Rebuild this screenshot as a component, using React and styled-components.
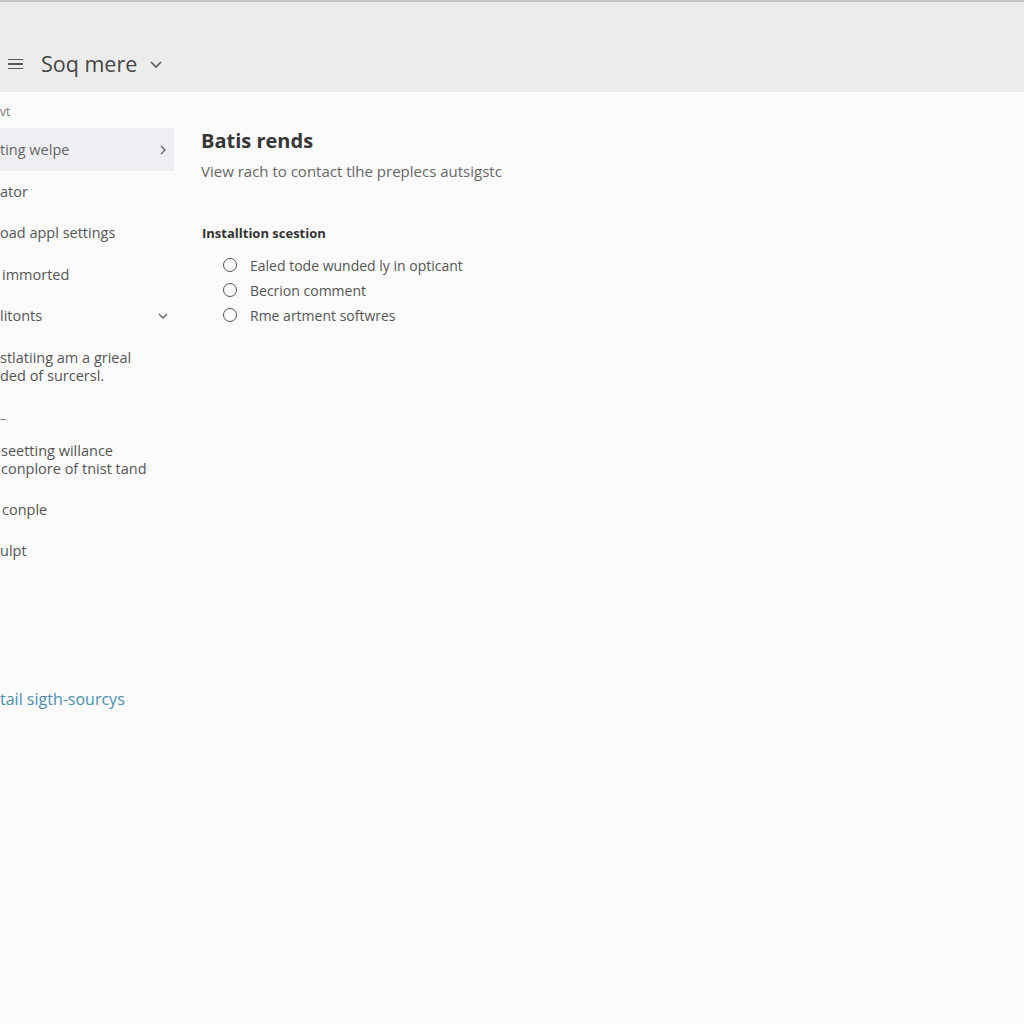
import React from 'react';
import styled, { createGlobalStyle } from 'styled-components';

const GlobalStyle = createGlobalStyle`
  html, body {
    margin: 0;
    padding: 0;
    background: #fbfbfb;
    font-family: 'Open Sans', 'Noto Sans', sans-serif;
  }
`;

const Page = styled.div`
  width: 1024px;
  height: 1024px;
  display: flex;
  flex-direction: column;
  background: #fbfbfb;
  overflow: hidden;
`;

const TopBar = styled.header`
  height: 92px;
  flex-shrink: 0;
  display: flex;
  align-items: flex-end;
  padding: 0 0 13px 8px;
  box-sizing: border-box;
  background: #ececec;
  border-top: 2px solid #c4c4c4;
`;

const Burger = styled.span`
  display: flex;
  flex-direction: column;
  gap: 3px;
  width: 15px;
  margin: 0 18px 10px 0;
  & > i {
    display: block;
    height: 1.5px;
    background: #555;
  }
`;

const AppTitle = styled.h1`
  margin: 0;
  font-size: 21.5px;
  font-weight: 400;
  color: #454545;
  line-height: 30px;
`;

const TitleChevron = styled.svg`
  margin: 0 0 8px 12px;
`;

const Body = styled.div`
  flex: 1;
  display: flex;
`;

const Sidebar = styled.nav`
  width: 174px;
  flex-shrink: 0;
  display: flex;
  flex-direction: column;
  padding-top: 10px;
`;

const Crumb = styled.div`
  font-size: 12px;
  color: #777;
  height: 26px;
  line-height: 20px;
`;

const NavItem = styled.div`
  display: flex;
  align-items: ${(p) => (p.$multi ? 'flex-start' : 'center')};
  justify-content: space-between;
  height: ${(p) => p.$h || 41.5}px;
  padding-top: ${(p) => p.$top || 0}px;
  padding-left: ${(p) => p.$indent || 0}px;
  padding-right: 5px;
  box-sizing: border-box;
  flex-shrink: 0;
  font-size: 14.5px;
  line-height: 18px;
  color: ${(p) => (p.$active ? '#666' : '#555')};
  background: ${(p) => (p.$active ? '#efeff3' : 'transparent')};
  white-space: pre-line;
`;

const Dash = styled.div`
  height: 42px;
  display: flex;
  align-items: center;
  font-size: 12px;
  color: #777;
  flex-shrink: 0;
`;

const NavLink = styled.a`
  margin-top: 117px;
  font-size: 16px;
  line-height: 20px;
  color: #4c8eaf;
  text-decoration: none;
`;

const Main = styled.main`
  flex: 1;
  padding: 35px 0 0 27px;
  display: flex;
  flex-direction: column;
`;

const Heading = styled.h2`
  margin: 0;
  font-size: 20px;
  font-weight: 700;
  color: #363636;
  line-height: 28px;
`;

const Subtitle = styled.p`
  margin: 6px 0 0;
  font-size: 15px;
  color: #666;
  line-height: 20px;
`;

const SectionTitle = styled.h3`
  margin: 43px 0 0 1px;
  font-size: 13px;
  font-weight: 700;
  color: #333;
  line-height: 18px;
`;

const RadioList = styled.ul`
  list-style: none;
  margin: 13.5px 0 0 22px;
  padding: 0;
  display: flex;
  flex-direction: column;
  gap: 6px;
`;

const RadioRow = styled.li`
  display: flex;
  align-items: center;
  gap: 13px;
  font-size: 14px;
  color: #555;
  line-height: 19px;
`;

const Circle = styled.span`
  width: 14px;
  height: 14px;
  border: 1.5px solid #555;
  border-radius: 50%;
  box-sizing: border-box;
`;

const Chevron = ({ dir }) => (
  <svg width="12" height="12" viewBox="0 0 12 12" fill="none" stroke="#666" strokeWidth="1.4">
    {dir === 'right' ? <path d="M4 2l4 4-4 4" /> : <path d="M2 4l4 4 4-4" />}
  </svg>
);

const navItems = [
  { label: 'ting welpe', active: true, icon: 'right', h: 43 },
  { label: 'ator' },
  { label: 'oad appl settings' },
  { label: ' immorted', indent: 2 },
  { label: 'litonts', icon: 'down' },
];

const options = ['Ealed tode wunded ly in opticant', 'Becrion comment', 'Rme artment softwres'];

export default function App() {
  return (
    <Page>
      <GlobalStyle />
      <TopBar>
        <Burger>
          <i />
          <i />
          <i />
        </Burger>
        <AppTitle>Soq mere</AppTitle>
        <TitleChevron width="14" height="14" viewBox="0 0 14 14" fill="none" stroke="#555" strokeWidth="1.6">
          <path d="M2 5l5 5 5-5" />
        </TitleChevron>
      </TopBar>
      <Body>
        <Sidebar>
          <Crumb>vt</Crumb>
          {navItems.map((item) => (
            <NavItem key={item.label} $active={item.active} $indent={item.indent} $h={item.h}>
              <span>{item.label}</span>
              {item.icon && <Chevron dir={item.icon} />}
            </NavItem>
          ))}
          <NavItem $multi $h={60} $top={12}>{'stlatiing am a grieal\nded of surcersl.'}</NavItem>
          <Dash>–</Dash>
          <NavItem $multi $h={50} $top={3} $indent={1}>{'seetting willance\nconplore of tnist tand'}</NavItem>
          <NavItem $indent={2}>conple</NavItem>
          <NavItem>ulpt</NavItem>
          <NavLink href="#">tail sigth-sourcys</NavLink>
        </Sidebar>
        <Main>
          <Heading>Batis rends</Heading>
          <Subtitle>View rach to contact tlhe preplecs autsigstc</Subtitle>
          <SectionTitle>Installtion scestion</SectionTitle>
          <RadioList>
            {options.map((o) => (
              <RadioRow key={o}>
                <Circle />
                {o}
              </RadioRow>
            ))}
          </RadioList>
        </Main>
      </Body>
    </Page>
  );
}
